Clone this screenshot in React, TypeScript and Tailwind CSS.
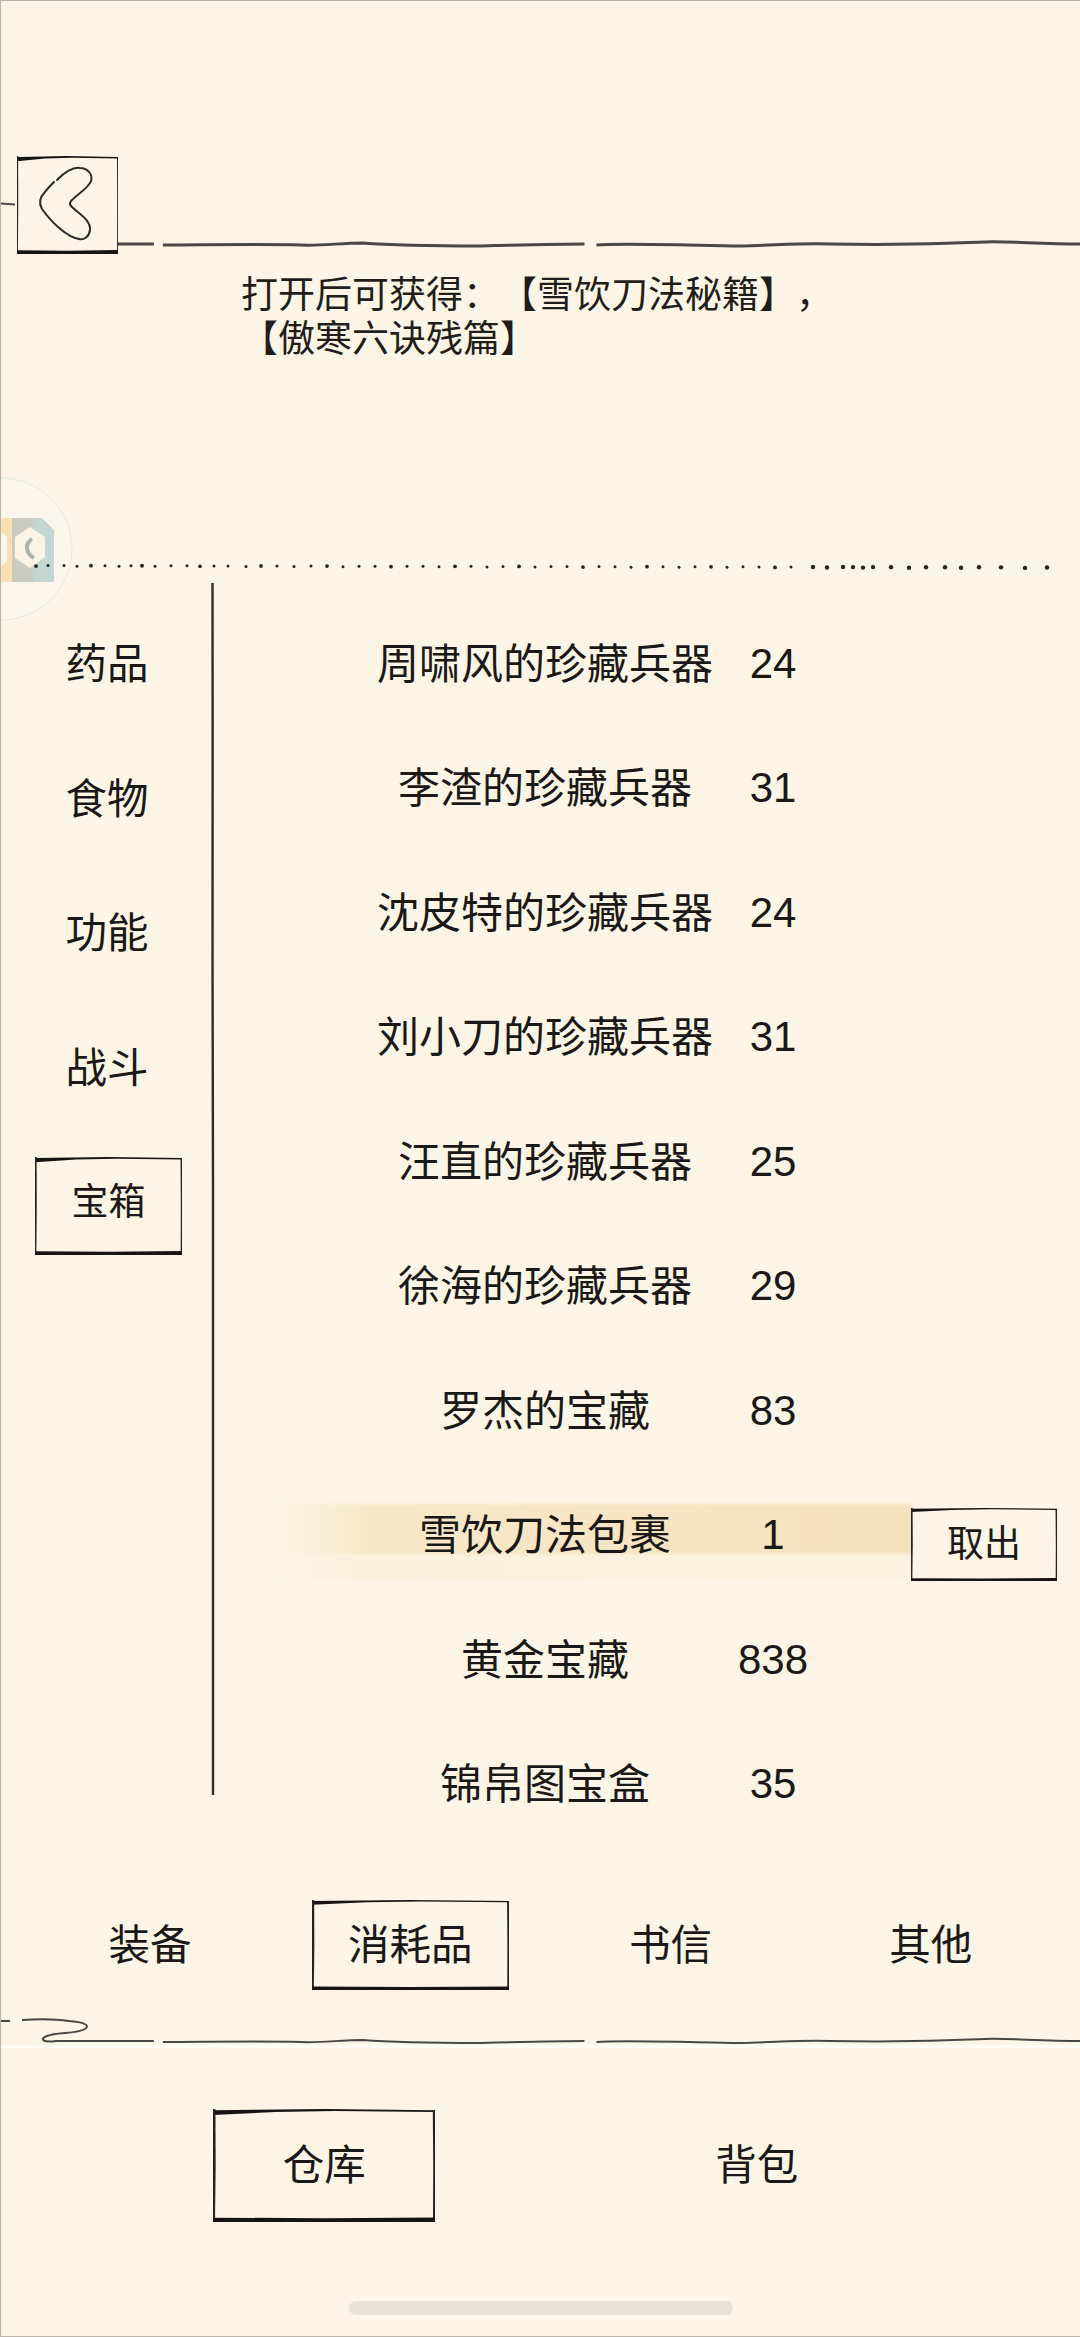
const fontStack = "font-['Liberation_Sans','Noto_Sans_CJK_SC',sans-serif]";

const categories = ['药品', '食物', '功能', '战斗', '宝箱'];

const items = [
  { name: '周啸风的珍藏兵器', count: 24 },
  { name: '李渣的珍藏兵器', count: 31 },
  { name: '沈皮特的珍藏兵器', count: 24 },
  { name: '刘小刀的珍藏兵器', count: 31 },
  { name: '汪直的珍藏兵器', count: 25 },
  { name: '徐海的珍藏兵器', count: 29 },
  { name: '罗杰的宝藏', count: 83 },
  { name: '雪饮刀法包裹', count: 1, selected: true },
  { name: '黄金宝藏', count: 838 },
  { name: '锦帛图宝盒', count: 35 },
];

const dotXs = [
  35, 47, 63, 76, 90, 104, 118, 130, 141, 154, 170, 186, 199, 213, 227, 245, 260, 276, 293, 310, 326, 342, 358, 374,
  390, 406, 422, 438, 454, 470, 486, 502, 518, 534, 550, 566, 582, 598, 614, 630, 646, 662, 678, 694, 710, 726, 742,
  758, 774, 790, 812, 826, 842, 852, 862, 872, 890, 908, 925, 944, 960, 978, 1000, 1024, 1046,
];

// 手绘方框：上边左侧粗，下边粗
function SketchFrame() {
  return (
    <svg className="absolute inset-0 h-full w-full" viewBox="0 0 100 100" preserveAspectRatio="none">
      <path d="M0 1 L50 0 L100 1 L100 2.6 L55 1.8 L28 2.6 L0 5.4 Z" fill="#161512" />
      <path d="M0 0 L1.1 0 L1.2 50 L0.9 100 L0 100 Z" fill="#24231f" />
      <path d="M99 1 L100 1 L100 100 L99.1 100 L99.2 50 Z" fill="#24231f" />
      <path d="M0 96.2 L50 96.6 L100 96 L100 100 L0 100 Z" fill="#161512" />
    </svg>
  );
}

function SketchLine({ swirl }: { swirl?: boolean }) {
  return (
    <svg className="absolute inset-0 h-full w-full overflow-visible" viewBox="0 0 1080 60" fill="none" stroke="#4a4843">
      <path
        d="M117 48 L153 48 M162 49 C200 49 260 48 300 49 C320 50 340 47 362 47 C400 50 440 50 480 50 C520 49 560 48 584 48 M596 49 C620 47 680 49 740 50 C780 49 800 47 830 48 C880 49 940 48 985 46 C1005 45 1040 48 1080 48"
        strokeWidth={swirl ? 2 : 3}
      />
      {swirl && (
        <path
          d="M0 28 L9 28 M21 27 C35 26 55 26 68 28 C82 29 90 32 84 36 C76 41 56 39 46 43 C38 46 42 50 55 48 L117 48"
          strokeWidth={2}
        />
      )}
    </svg>
  );
}

function Watermark() {
  return (
    <svg className="absolute left-0 top-[476px] h-[150px] w-[76px]" viewBox="0 0 76 150">
      <circle cx="0" cy="72" r="71" fill="#fbf6ea" stroke="#e3eadf" strokeWidth="1" />
      <rect x="0" y="41" width="11" height="64" fill="#f9dfb6" />
      <rect x="11" y="41" width="21" height="64" fill="#cbcbc1" />
      <path d="M32 41 L41 41 L53 53 L53 105 L32 105 Z" fill="#c3d6d1" />
      <path d="M0 55 L6 60 L6 84 L0 89 Z" fill="#fbf6ea" />
      <path d="M29 50 L44 60 L44 80 L29 91 L14 81 L14 60 Z" fill="#fbf3e4" />
      <path d="M31 62 C24 66 24 76 33 81" fill="none" stroke="#aab5ad" strokeWidth="4" />
    </svg>
  );
}

export default function App() {
  return (
    <div
      className={`relative flex h-[2337px] w-[1080px] flex-col overflow-hidden border-y border-l border-[#b9b4a6] bg-[#fcf5e5] text-[#1a1917] ${fontStack}`}
    >
      {/* 顶部 */}
      <div className="relative h-[253px] pt-[155px]">
        <div className="absolute left-0 right-0 top-[195px] h-[60px]">
          <SketchLine />
        </div>
        <svg className="absolute left-0 top-[201px] h-[4px] w-[15px]" viewBox="0 0 15 4">
          <path d="M0 1.5 L14 2.5" stroke="#4a4842" strokeWidth="2" />
        </svg>
        <button className="relative ml-[16px] block h-[98px] w-[101px] bg-[#fcf5e5]">
          <SketchFrame />
          <svg className="absolute inset-0 h-full w-full" viewBox="0 0 101 98" fill="none">
            <path
              d="M40 24 C48 16 56 11 63 12 C71 12 76 19 74 25 C71 33 60 38 54 45 C52 48 53 49 55 51 C62 58 74 64 73 74 C72 81 67 84 62 83 C50 81 35 67 25 53 C21 46 24 40 28 36 C31 32 34 29 37 26"
              stroke="#2b2a26"
              strokeWidth="2"
              strokeLinecap="round"
            />
          </svg>
        </button>
      </div>

      {/* 说明 */}
      <div className="h-[309px] pl-[240px] pt-[20px] text-[37px] leading-[44px] text-[#1f1e1b] [text-spacing-trim:space-all]">
        <p className="whitespace-nowrap">打开后可获得：【雪饮刀法秘籍】，</p>
        <p className="whitespace-nowrap">【傲寒六诀残篇】</p>
      </div>

      <Watermark />

      {/* 虚线 */}
      <svg className="relative h-[20px] w-[1080px] shrink-0" viewBox="0 0 1080 20">
        {dotXs.map((x, i) => (
          <circle
            key={x}
            cx={x}
            cy={2.5 + (x / 1080) * 2 + (i % 3 === 0 ? 0.5 : 0)}
            r={x > 800 ? 2.2 : i % 4 === 0 ? 1.9 : 1.5}
            fill="#26251f"
          />
        ))}
      </svg>

      {/* 主体 */}
      <div className="flex h-[1317px] shrink-0">
        <div className="flex w-[209px] flex-col items-center pl-[3px] pt-[15px] text-[41.5px]">
          {categories.map((c) =>
            c === '宝箱' ? (
              <div key={c} className="flex h-[134.5px] items-center">
                <div className="relative ml-[3px] mt-[6px] flex h-[98px] w-[147px] items-center justify-center pb-[8px] text-[37px]">
                  <SketchFrame />
                  <span className="relative">{c}</span>
                </div>
              </div>
            ) : (
              <div key={c} className="flex h-[134.5px] items-center">
                {c}
              </div>
            ),
          )}
        </div>

        <svg className="h-[1212px] w-[6px] shrink-0" viewBox="0 0 6 1212" fill="none">
          <path d="M2.5 0 C3 200 2 400 3 600 C3.6 800 2 1000 3 1212" stroke="#2d2c28" strokeWidth="2.4" />
        </svg>

        <div className="flex-1 pt-[18px]">
          {items.map((item) => (
            <div key={item.name} className="relative flex h-[124.5px] items-center pl-[143px]">
              {item.selected && (
                <div className="absolute left-[56px] top-[31px] h-[76px] w-[640px] blur-[1.5px]">
                  <div className="h-[50px] bg-linear-to-r from-[#fcf5e5] via-[#f7e7c9] via-15% to-[#f5e1bd]" />
                  <div className="h-[26px] bg-linear-to-r from-[#fcf5e5] via-[#faf0dc] via-15% to-[#fbf2df]" />
                </div>
              )}
              <span className="relative w-[372px] pt-[2px] text-center text-[42px] whitespace-nowrap">{item.name}</span>
              <span className="relative w-[84px] text-center text-[42px]">{item.count}</span>
              {item.selected && (
                <div className="relative ml-[96px] mt-[20px] flex h-[73px] w-[146px] items-center justify-center text-[37px]">
                  <div className="absolute inset-0 bg-[#fcf5e5]" />
                  <SketchFrame />
                  <span className="relative">取出</span>
                </div>
              )}
            </div>
          ))}
        </div>
      </div>

      {/* 分类 */}
      <div className="grid h-[90px] shrink-0 grid-cols-4 px-[19px] text-[41.5px]">
        <div className="flex items-center justify-center pt-[2px]">装备</div>
        <div className="relative mx-auto flex h-[90px] w-[197px] items-center justify-center pt-[2px]">
          <SketchFrame />
          <span className="relative">消耗品</span>
        </div>
        <div className="flex items-center justify-center pt-[2px]">书信</div>
        <div className="flex items-center justify-center pt-[2px]">其他</div>
      </div>

      {/* 分隔线 */}
      <div className="relative h-[55px] shrink-0">
        <div className="absolute inset-x-0 top-[3px] h-[60px]">
          <SketchLine swirl />
        </div>
      </div>
      <div className="relative h-[3px] shrink-0 bg-[#fffcf3]" />
      <div className="h-[61px] shrink-0" />

      {/* 底部导航 */}
      <div className="grid h-[113px] shrink-0 grid-cols-2 px-[107px] text-[41.5px]">
        <div className="relative mx-auto flex h-[113px] w-[222px] items-center justify-center pt-[2px]">
          <SketchFrame />
          <span className="relative">仓库</span>
        </div>
        <div className="flex items-center justify-center pt-[2px]">背包</div>
      </div>

      <div className="mx-auto mt-[79px] h-[14px] w-[384px] rounded-full bg-[#e8e2d5]" />
    </div>
  );
}
